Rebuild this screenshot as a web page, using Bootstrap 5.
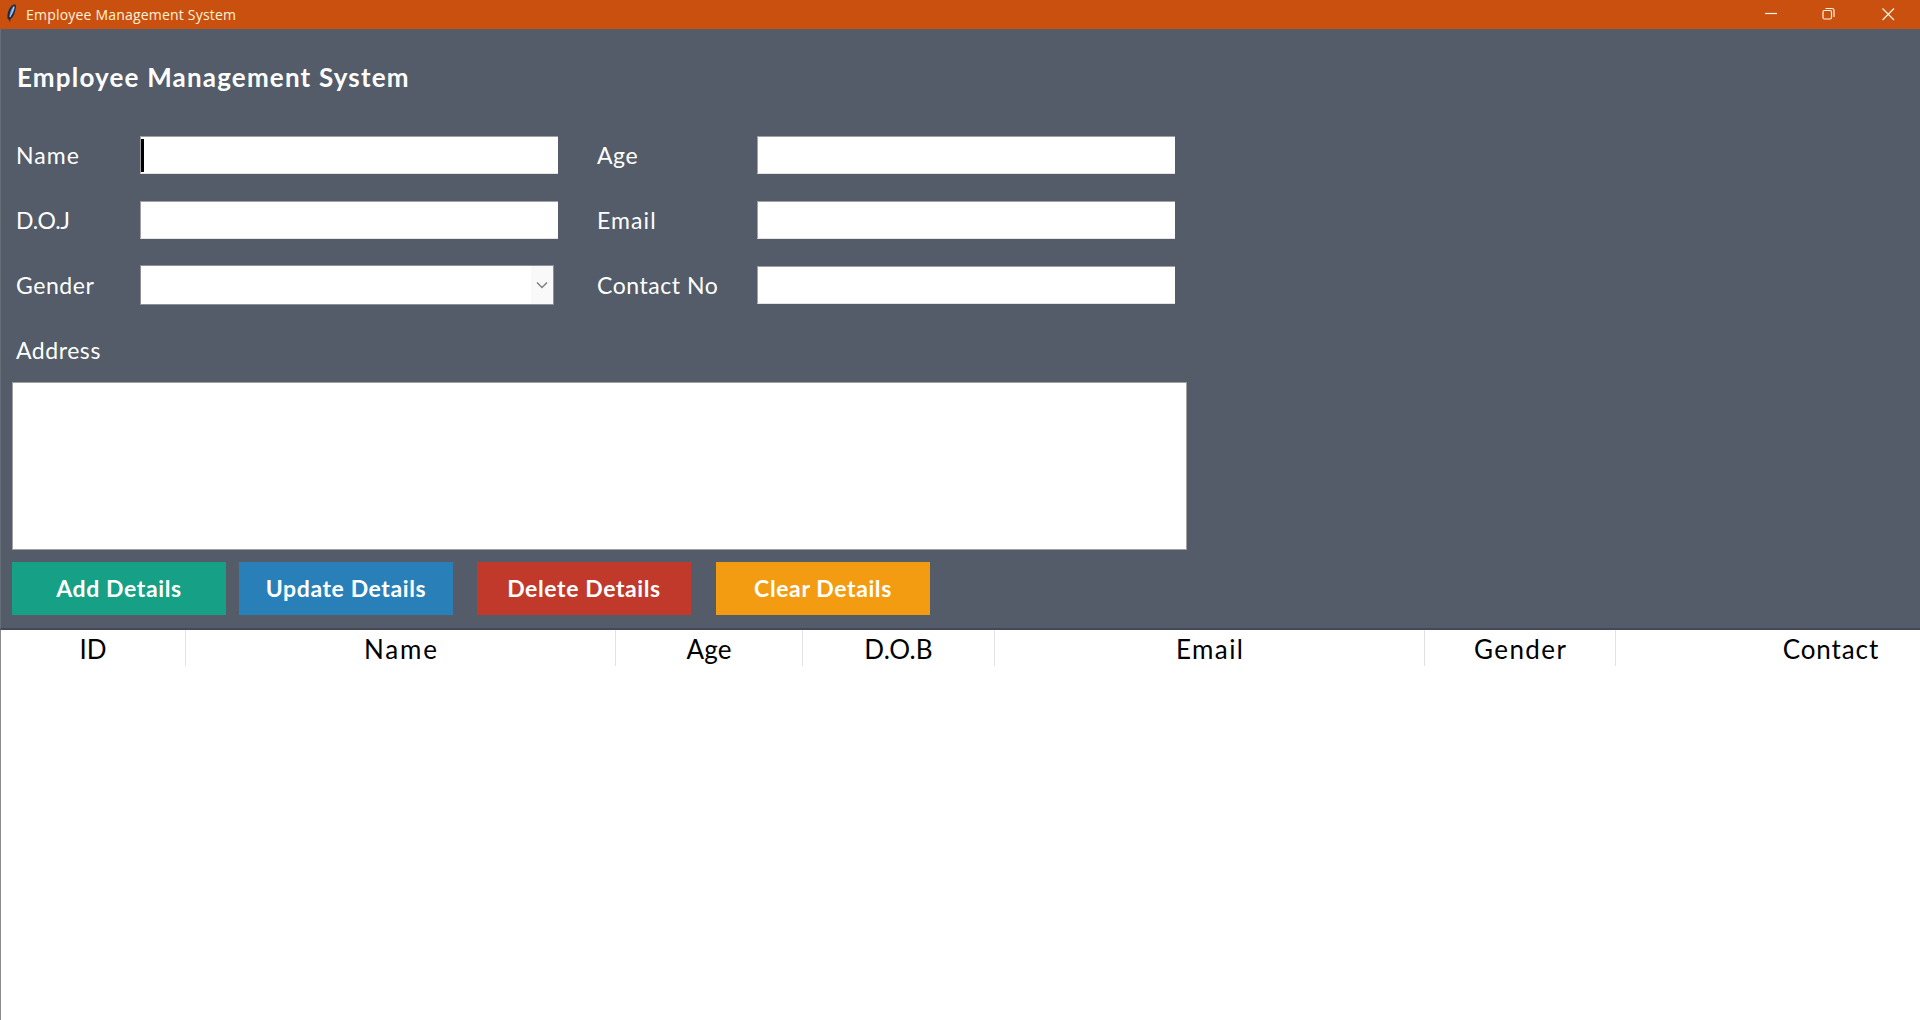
<!DOCTYPE html>
<html lang="en">
<head>
<meta charset="utf-8">
<title>Employee Management System</title>
<link href="https://cdn.jsdelivr.net/npm/bootstrap@5.3.0/dist/css/bootstrap.min.css" rel="stylesheet">
<style>
body{width:1920px;height:1020px;overflow:hidden;background:#fff;font-family:Lato,"Noto Sans",sans-serif;color:#000}
.titlebar{height:29px;background:#ca5010;color:#fff3d8;font-family:"Open Sans",sans-serif;font-size:14px;padding-left:5px}
.caption-text{letter-spacing:.2px;line-height:29px;margin-left:6px}
.win-btn{width:58.5px;height:29px}
.entry-panel{height:601px;background:#535c68;border-left:1px solid #666e79;border-bottom:2px solid #434959;padding:0 11px;color:#fff}
.panel-title{font-size:26px;font-weight:700;line-height:32px;letter-spacing:1.18px;padding:32px 0 0 5px;height:107px;margin:0}
.fields{display:grid;grid-template-columns:128px 452px 165px 418px;grid-auto-rows:65px;font-size:23px}
.fields label{line-height:38px;padding-left:4px;letter-spacing:.55px}
.fields .wide{letter-spacing:1.1px}
.fields .tight{letter-spacing:-.2px}
.fields .second{padding-left:5px}
.entry{height:38px;width:418px;background:#fff;border:1px solid #a0a0a0;border-right:0;border-bottom-color:#e3e3e3;border-radius:0;outline:0;padding:0}
.combo{width:414px;height:40px;margin-top:-1px;background:#fff;border:1px solid #8d9097}
.combo-arrow{width:22px;background:#f9f9f9}
.caret-bar{width:3px;height:33px;background:#000;margin:2px 0 0}
.address-box{width:1175px;height:168px;margin:-14px 0 0;border:1px solid #a0a0a0;border-radius:0;resize:none;background:#fff;display:block;outline:0}
.actions{padding-top:12px;display:grid;grid-template-columns:227px 238px 239px 214px}
.action{width:214px;height:53px;border-radius:0;border:0;font-weight:700;font-size:23px;padding:0;line-height:53px;letter-spacing:.6px}
.action,.action:hover{color:#fff}
.bg-add,.bg-add:hover{background:#16a085}
.bg-upd,.bg-upd:hover{background:#2980b9}
.bg-del,.bg-del:hover{background:#c0392b}
.bg-clr,.bg-clr:hover{background:#f39c12}
.tree{height:390px;border-left:1px solid #8b8b8b;overflow:hidden}
.tree table{table-layout:fixed;width:2045px;font-size:26px;border-collapse:separate;border-spacing:0}
.tree th{font-weight:400;height:36px;line-height:36px;padding:0 0 0 var(--ls);letter-spacing:var(--ls);text-align:center;border-right:1px solid #e2e2e6;--ls:1.4px}
.tree .ls-3{--ls:1.9px}
.tree .ls-1{--ls:.9px}
.tree .ls-0{--ls:.1px}
.tree th span{display:block;height:36px;line-height:39px}
.w-185{width:185px}.w-187{width:187px}.w-192{width:192px}.w-191{width:191px}.w-430{width:430px}
</style>
<script src="https://cdn.jsdelivr.net/npm/bootstrap@5.3.0/dist/js/bootstrap.bundle.min.js"></script>
</head>
<body>
<header class="titlebar d-flex align-items-start">
  <svg width="15" height="29" viewBox="0 0 15 29"><path d="M5 22.5C4.500 21 4 19.500 2.500 18.500C2 13 4 7 8.500 4.500C11 4 11.500 5 10.800 8C10 13 8.500 17 5.500 19Z" fill="#1d2c40"/><path d="M4.500 17C4.500 12 6.500 7.500 9.500 5.500C10 9 8 14.500 4.500 17Z" fill="#5e92cf"/><path d="M5 17L9 7" stroke="#dbe9fb" stroke-width=".8"/></svg>
  <span class="caption-text">Employee Management System</span>
  <div class="ms-auto d-flex me-1">
    <svg class="win-btn" viewBox="0 0 58.500 29"><path d="M24 13.500H36" stroke="#fff3e6" stroke-width="1.200"/></svg>
    <svg class="win-btn" viewBox="0 0 58.500 29" fill="none" stroke="#fff3e6" stroke-width="1.200"><rect x="24" y="10.500" width="8.500" height="8.500" rx="1.500"/><path d="M26.500 8.500H33Q35 8.500 35 10.500V17"/></svg>
    <svg class="win-btn" viewBox="0 0 58.500 29"><path d="M24.500 8.500L36 20M36 8.500L24.500 20" stroke="#fff3e6" stroke-width="1.200"/></svg>
  </div>
</header>
<main>
<section class="entry-panel">
  <h1 class="panel-title">Employee Management System</h1>
  <div class="fields">
    <label class="wide">Name</label><div class="entry" role="textbox" aria-label="Name"><div class="caret-bar"></div></div>
    <label class="second">Age</label><input class="entry" type="text" aria-label="Age">
    <label class="tight">D.O.J</label><input class="entry" type="text" aria-label="D.O.J">
    <label class="wide second">Email</label><input class="entry" type="text" aria-label="Email">
    <label>Gender</label><div class="combo d-flex justify-content-end"><span class="combo-arrow d-flex align-items-center justify-content-center"><svg width="12" height="8" viewBox="0 0 12 8"><path d="M1 1.500L6 6.500L11 1.500" fill="none" stroke="#808080" stroke-width="1.500"/></svg></span></div>
    <label class="second">Contact No</label><input class="entry" type="text" aria-label="Contact No">
    <label>Address</label>
  </div>
  <textarea class="address-box" aria-label="Address"></textarea>
  <div class="actions">
    <button class="btn action bg-add">Add Details</button>
    <button class="btn action bg-upd">Update Details</button>
    <button class="btn action bg-del">Delete Details</button>
    <button class="btn action bg-clr">Clear Details</button>
  </div>
</section>
<section class="tree">
  <table>
    <colgroup><col class="w-185"><col class="w-430"><col class="w-187"><col class="w-192"><col class="w-430"><col class="w-191"><col class="w-430"></colgroup>
    <thead><tr><th class="ls-0"><span>ID</span></th><th class="ls-3"><span>Name</span></th><th class="ls-0"><span>Age</span></th><th class="ls-0"><span>D.O.B</span></th><th><span>Email</span></th><th><span>Gender</span></th><th class="ls-1"><span>Contact</span></th></tr></thead>
  </table>
</section>
</main>
</body>
</html>
